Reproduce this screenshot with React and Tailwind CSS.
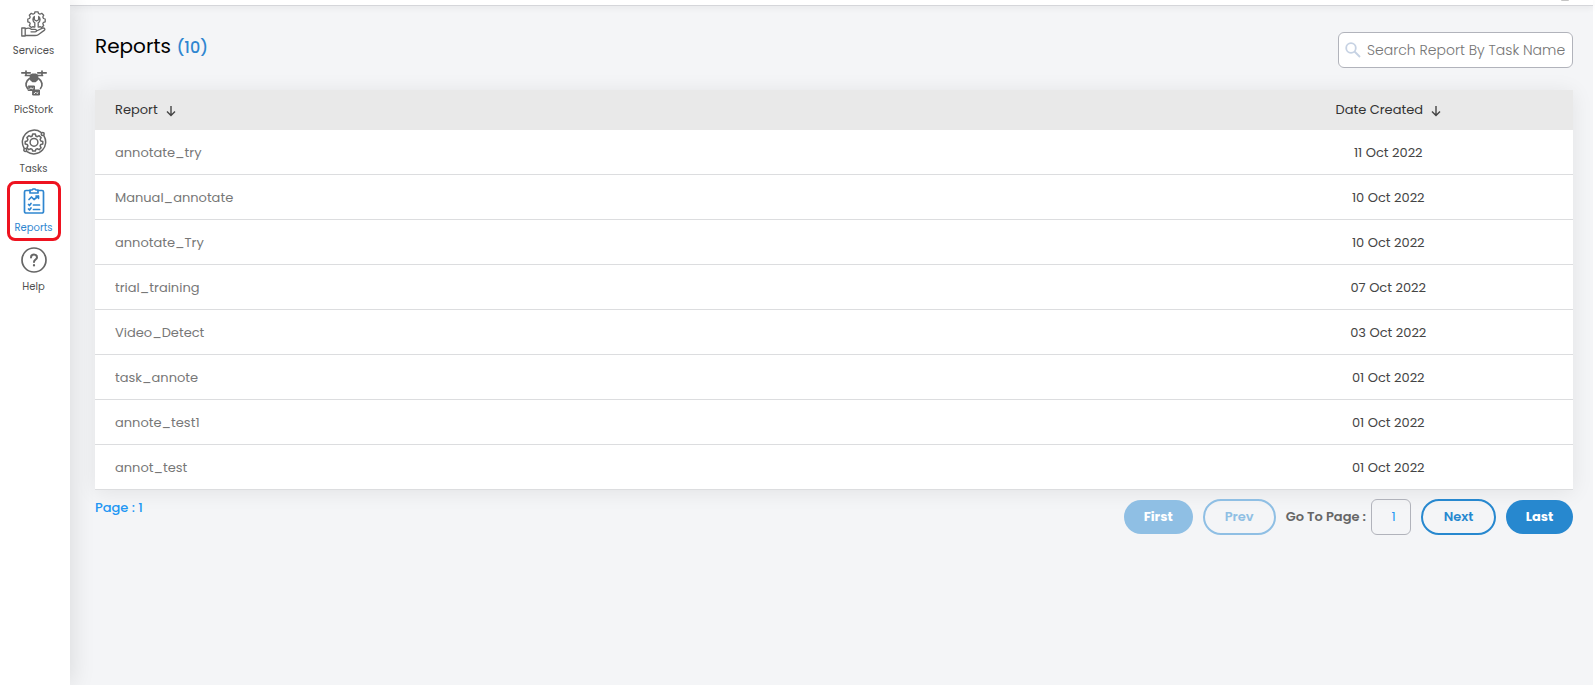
import React from 'react';

const reports = [
  { name: 'annotate_try', date: '11 Oct 2022' },
  { name: 'Manual_annotate', date: '10 Oct 2022' },
  { name: 'annotate_Try', date: '10 Oct 2022' },
  { name: 'trial_training', date: '07 Oct 2022' },
  { name: 'Video_Detect', date: '03 Oct 2022' },
  { name: 'task_annote', date: '01 Oct 2022' },
  { name: 'annote_test1', date: '01 Oct 2022' },
  { name: 'annot_test', date: '01 Oct 2022' },
];

const iconProps = {
  width: 26,
  height: 26,
  viewBox: '0 0 26 26',
  fill: 'none',
  stroke: 'currentColor',
  strokeLinecap: 'round',
  strokeLinejoin: 'round',
  'aria-hidden': true,
};

function ServicesIcon() {
  return (
    <svg {...iconProps} strokeWidth="1.3">
      <path d="M14 .8h3l.5 1.700 1.500.7 1.700-.9 2 2-.9 1.700.7 1.500 1.700.5v2.800l-1.700.5-.7 1.500.9 1.700-2 2-1.700-.9-1 .5M14 .8l-.5 1.700-1.500.7-1.700-.9-2 2 .9 1.700-.7 1.500-1.700.5v2.800l1.700.5.7 1.500-.9 1.700 2 2 1.700-.9 1 .5" />
      <path d="M13.800 16v-4.200c-2.300-1.200-2.500-4.800-.5-6.300v3.200l2.200 1.300 2.200-1.300V5.500c2 1.500 1.800 5.100-.5 6.300V16" />
      <path d="M.8 17h3.400v8H.8zM4.200 18c2.500-1.300 4.500-1 6 .3h4c1.600 0 1.800 2.400 0 2.500H10M15.500 20l6-2.800c2-.7 3.200 1 1.700 2.200l-6 4.300c-1 .7-2 .8-3.200.8H4.200" />
    </svg>
  );
}

function DroneIcon() {
  return (
    <svg {...iconProps} strokeWidth="1.700">
      <path d="M.8 2.800h8.400M16.800 2.800h8.400" />
      <path d="M5 1v4M21 1v4M4.500 5.500h17" />
      <path d="M9.500 5.500l2-1.200h3l2 1.200-.2 4-2 1.800h-2.600l-2-1.800z" fill="currentColor" />
      <path d="M8.500 8.500c-4 2.500-4.500 7.500-2 10M17.500 8.500c4 2.500 4.500 7.500 2 10" />
      <path d="M7.500 16h6v4.500h-6zM12 20h6.500v5H12z" fill="currentColor" strokeWidth="1" />
      <path d="M8.500 19.200l1.500-1.500 1.300 1.300 1-.8M13.200 23.700l1.500-1.500 1.300 1.300 1-.8" stroke="white" strokeWidth="1" />
    </svg>
  );
}

function TasksIcon() {
  return (
    <svg {...iconProps} strokeWidth="1.5">
      <path d="M4.500 5A11.700 11.700 0 0 1 20 3.300M23 7a11.700 11.700 0 0 1-1.500 14M21.500 21A11.700 11.700 0 0 1 6 22.700M3 19A11.700 11.700 0 0 1 4.500 5" />
      <circle cx="21.700" cy="5" r="1.500" />
      <circle cx="4.300" cy="21" r="1.500" />
      <path d="M11.700 5h2.600l.5 2 1.500.7 1.900-1 1.900 1.900-1 1.900.7 1.400 2 .5v2.500l-2 .5-.7 1.500 1 1.900-1.900 1.900-1.900-1-1.500.7-.5 1.500h-2.600l-.5-1.500-1.500-.7-1.900 1-1.900-1.900 1-1.900-.7-1.500-2-.5v-2.500l2-.5.7-1.400-1-1.900 1.900-1.900 1.900 1 1.500-.7z" />
      <circle cx="13" cy="13.300" r="3.900" />
    </svg>
  );
}

function ReportsIcon() {
  return (
    <svg {...iconProps} strokeWidth="1.700">
      <path d="M9 2.500H5A1.500 1.500 0 0 0 3.500 4v19.500A1.500 1.500 0 0 0 5 25h16a1.500 1.500 0 0 0 1.500-1.500V4A1.500 1.500 0 0 0 21 2.500h-4" />
      <path d="M9 2h2l1-1h2l1 1h2v3H9z" />
      <path d="M8 11.500l2.500-2.500 2.500 2.500L17.500 8M15 8h2.500v2.300" />
      <path d="M7.500 16.500l1 1 1.500-2M7.500 21l1 1 1.500-2M12.500 17h6M12.500 21.500h6" />
    </svg>
  );
}

function HelpIcon() {
  return (
    <svg {...iconProps} strokeWidth="1.700">
      <circle cx="13" cy="13" r="12" />
      <path d="M10 10.500c0-4 6-4 6 0 0 2-3 2.200-3 4.500" strokeWidth="2" />
      <path d="M13 18.200v.3" strokeWidth="2.200" />
    </svg>
  );
}

const navItems = [
  { label: 'Services', Icon: ServicesIcon },
  { label: 'PicStork', Icon: DroneIcon },
  { label: 'Tasks', Icon: TasksIcon },
  { label: 'Reports', Icon: ReportsIcon, active: true },
  { label: 'Help', Icon: HelpIcon },
];

function NavItem({ label, Icon, active }) {
  return (
    <li className="relative">
      <a
        href="#"
        aria-current={active ? 'page' : undefined}
        className={
          active
            ? 'flex h-[59px] flex-col items-center gap-[6px] pt-2 text-[#2f86d0]'
            : 'flex h-[59px] flex-col items-center gap-[6px] pt-2 text-[#666666]'
        }
      >
        <Icon />
        <span className={active ? 'text-[10px] leading-4' : 'text-[10px] leading-4 text-[#505050]'}>
          {label}
        </span>
      </a>
      {active && (
        <span className="pointer-events-none absolute top-px right-[6px] -bottom-[2px] left-[7px] rounded-lg border-3 border-[#ee1320]" />
      )}
    </li>
  );
}

function SortArrow() {
  return (
    <svg className="mt-[2px]" width="10" height="12" viewBox="0 0 10 12" fill="none" stroke="#444444" strokeWidth="1.400" aria-hidden="true">
      <path d="M5 1v9.500M1 6.500l4 4 4-4" />
    </svg>
  );
}

function ReportRow({ report }) {
  return (
    <tr className="h-[45px] bg-white">
      <td className="border-b border-[#dcdddf] px-5 pt-[2px] text-[#777777]">{report.name}</td>
      <td className="border-b border-[#dcdddf] pt-[2px] text-center text-[#444444]">{report.date}</td>
    </tr>
  );
}

export default function App() {
  return (
    <div className="flex min-h-screen bg-white pr-[2px] font-['Poppins','Inter',sans-serif] text-[13px]">
      <nav className="z-10 w-[70px] shrink-0 bg-white pt-[3px] pr-[3px] shadow-[2px_0_24px_rgba(0,0,0,0.11)]">
        <ul>
          {navItems.map((item) => (
            <NavItem key={item.label} {...item} />
          ))}
        </ul>
      </nav>

      <div className="flex flex-1 flex-col bg-[#f4f5f7]">
        <header className="flex h-[6px] shrink-0 items-start justify-end border-b border-[#d5d6da] bg-white pr-6 shadow-[0_2px_6px_rgba(0,0,0,0.06)]">
          <span className="h-px w-2 rounded-b-full bg-[#c4c4c4]" />
        </header>

        <main className="pr-5 pl-[25px] pt-[26px]">
          <div className="mb-[22px] flex items-start justify-between">
            <h1 className="text-xl leading-7 text-black">
              Reports <span className="text-base font-medium text-[#2f86d0]">(10)</span>
            </h1>
            <label className="flex h-9 w-[235px] items-center gap-[6px] rounded-md border border-[#b1b3bb] bg-white pr-1 pl-[6px]">
              <svg className="shrink-0" width="16" height="16" viewBox="0 0 16 16" fill="none" stroke="#c6d2e3" strokeWidth="1.800" aria-hidden="true">
                <circle cx="6" cy="6" r="4.800" />
                <path d="M9.500 9.500l5.500 5.500" />
              </svg>
              <input
                type="text"
                aria-label="Search reports"
                placeholder="Search Report By Task Name"
                className="w-full min-w-0 bg-transparent text-sm font-light outline-none placeholder:text-[#757575]"
              />
            </label>
          </div>

          <table className="w-full table-fixed border-separate border-spacing-0 shadow-[0_2px_20px_rgba(0,0,0,0.08)]">
            <thead>
              <tr className="h-10 bg-[#e9e9e9] text-[#333333]">
                <th className="w-3/4 px-5 text-left font-normal">
                  <span className="flex items-center gap-2">
                    Report <SortArrow />
                  </span>
                </th>
                <th className="w-1/4 font-normal">
                  <span className="flex items-center justify-center gap-2">
                    Date Created <SortArrow />
                  </span>
                </th>
              </tr>
            </thead>
            <tbody>
              {reports.map((report) => (
                <ReportRow key={report.name} report={report} />
              ))}
            </tbody>
          </table>

          <div className="flex items-start justify-between pt-[9px]">
            <p className="font-medium leading-[18px] text-[#2196f3]">Page : 1</p>
            <div className="flex items-center gap-[10px]">
              <button disabled className="h-[34px] w-[69px] rounded-full bg-[#8fbfe4] font-bold text-white">
                First
              </button>
              <button disabled className="h-9 w-[73px] rounded-full border-2 border-[#8fbfe4] font-semibold text-[#8fbfe4]">
                Prev
              </button>
              <label className="flex items-center gap-[5px] font-semibold text-[#666666]">
                Go To Page :
                <input
                  type="text"
                  defaultValue="1"
                  className="h-9 w-10 rounded-md border border-[#b1b3bb] pl-[5px] text-center font-normal text-[#2196f3] outline-none"
                />
              </label>
              <button className="h-9 w-[75px] rounded-full border-2 border-[#2788cf] font-semibold text-[#2788cf]">
                Next
              </button>
              <button className="h-[34px] w-[67px] rounded-full bg-[#2788cf] font-bold text-white">
                Last
              </button>
            </div>
          </div>
        </main>
      </div>
    </div>
  );
}
